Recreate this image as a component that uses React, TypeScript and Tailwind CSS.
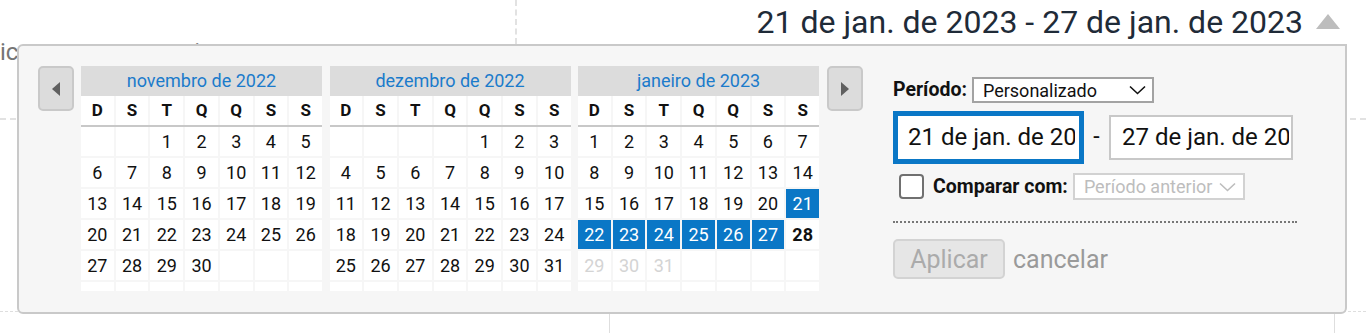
type Month = { title: string; offset: number; days: number };

const WEEK = ['D', 'S', 'T', 'Q', 'Q', 'S', 'S'];

const MONTHS: Month[] = [
  { title: 'novembro de 2022', offset: 2, days: 30 },
  { title: 'dezembro de 2022', offset: 4, days: 31 },
  { title: 'janeiro de 2023', offset: 0, days: 31 },
];

// dia com destaque só no último mês (janeiro)
function dayClass(isLast: boolean, d: number | null) {
  if (!isLast || d === null) return 'bg-white text-[#111]';
  if (d >= 21 && d <= 27) return 'bg-[#0a77c6] text-white';
  if (d === 28) return 'bg-white text-[#111] font-bold';
  if (d > 28) return 'bg-white text-[#d4d4d4]';
  return 'bg-white text-[#111]';
}

function MonthGrid({ month, isLast }: { month: Month; isLast: boolean }) {
  const cells = Array.from({ length: 42 }, (_, i) => {
    const d = i - month.offset + 1;
    return d >= 1 && d <= month.days ? d : null;
  });

  return (
    <div className="w-[241px] h-[225px] overflow-hidden shrink-0">
      <div className="h-[30px] bg-[#dcdcdc] text-center leading-[30px] text-[18px] text-[#1b7bcb]">
        {month.title}
      </div>
      <div className="grid grid-cols-7 gap-x-[2px] border-b-2 border-[#c8c8c8]">
        {WEEK.map((w, i) => (
          <div key={i} className="h-[29px] bg-white flex items-center justify-center font-bold text-[17px] text-[#111]">
            {w}
          </div>
        ))}
      </div>
      <div className="grid grid-cols-7 gap-[2px]">
        {cells.map((d, i) => (
          <div key={i} className={`h-[29px] flex items-center justify-center text-[18px] ${dayClass(isLast, d)}`}>
            {d ?? ''}
          </div>
        ))}
      </div>
    </div>
  );
}

function NavButton({ dir }: { dir: 'prev' | 'next' }) {
  return (
    <div className="w-[36px] h-[45px] shrink-0 rounded-[5px] border-2 border-[#c9c9c9] bg-[#dcdcdc] flex items-center justify-center">
      <svg width="8" height="14" viewBox="0 0 8 14">
        {dir === 'prev' ? (
          <polygon points="8,0 8,14 0,7" fill="#606060" />
        ) : (
          <polygon points="0,0 0,14 8,7" fill="#606060" />
        )}
      </svg>
    </div>
  );
}

function Chevron({ color }: { color: string }) {
  return (
    <svg width="17" height="10" viewBox="0 0 17 10">
      <polyline points="1,1.5 8.5,8.5 16,1.5" fill="none" stroke={color} strokeWidth="1.6" />
    </svg>
  );
}

function RangePanel() {
  return (
    <div className="ml-[30px] pt-[11px] flex flex-col">
      <div className="flex items-center gap-[5px]">
        <span className="font-bold text-[19.5px] text-[#111] leading-none">Período:</span>
        <div className="w-[182px] h-[26px] border-2 border-[#a3a3a3] bg-white flex items-center justify-between pl-[9px] pr-[6px] text-[18px] text-[#111]">
          Personalizado
          <Chevron color="#111" />
        </div>
      </div>

      <div className="mt-[8px] flex items-center">
        <div className="w-[191px] h-[53px] border-[5px] border-[#0a77c6] bg-white pl-[10px] pr-[4px]">
          <div className="overflow-hidden whitespace-nowrap text-[24px] leading-[43px] text-[#111]">21 de jan. de 2023</div>
        </div>
        <span className="w-[25px] text-center text-[23px] text-[#111]">-</span>
        <div className="w-[184px] h-[45px] border-2 border-[#c8c8c8] bg-white pl-[11px] pr-[2px]">
          <div className="overflow-hidden whitespace-nowrap text-[24px] leading-[41px] text-[#111]">27 de jan. de 2023</div>
        </div>
      </div>

      <div className="mt-[8px] pl-[6px] flex items-center">
        <div className="w-[25px] h-[25px] rounded-[4px] border-2 border-[#707070] bg-white" />
        <span className="ml-[9px] font-bold text-[19.5px] text-[#111]">Comparar com:</span>
        <div className="ml-[5px] w-[172px] h-[27px] border-2 border-[#d2d2d2] bg-white flex items-center justify-between pl-[9px] pr-[7px] text-[18px] text-[#bdbdbd]">
          Período anterior
          <Chevron color="#bdbdbd" />
        </div>
      </div>

      <div className="mt-[20px] w-[404px] border-t-2 border-dotted border-[#777]" />

      <div className="mt-[16px] flex items-center">
        <button className="w-[112px] h-[40px] rounded-[5px] border-2 border-[#d3d3d3] bg-[#e6e6e6] text-[25px] text-[#ababab] leading-none">
          Aplicar
        </button>
        <span className="ml-[8px] text-[25px] text-[#9a9a9a]">cancelar</span>
      </div>
    </div>
  );
}

export default function App() {
  return (
    <div className="relative w-[1366px] h-[334px] overflow-hidden bg-white font-['Roboto',sans-serif]">
      {/* página por trás do seletor */}
      <div className="flex h-[44px]">
        <div className="w-[517px] shrink-0 border-r-2 border-dashed border-[#e2e2e2] pt-[38px]">
          <div className="whitespace-nowrap text-[24px] leading-[28px] text-[#757575]">icone novos usuarios</div>
        </div>
        <div className="flex-1 flex justify-end items-start gap-[13px] pr-[26px]">
          <span className="mt-[2px] whitespace-nowrap text-[32px] leading-[40px] text-[#1f2b38]">
            21 de jan. de 2023 - 27 de jan. de 2023
          </span>
          <svg className="mt-[14px]" width="24" height="15" viewBox="0 0 24 15">
            <polygon points="12,0 24,15 0,15" fill="#bdbdbd" />
          </svg>
        </div>
      </div>
      <div className="h-[74px]" />
      <div className="h-[194px] border-t-2 border-dashed border-[#e2e2e2] border-b border-b-[#dedede]" />
      <div className="flex h-[21px]">
        <div className="w-[610px] border-r border-[#dedede]" />
        <div className="w-[725px] border-r border-[#dedede]" />
      </div>

      {/* seletor de período */}
      <div className="absolute left-[17px] top-[44px] w-[1330px] h-[270px] rounded-[6px] rounded-tr-none border-2 border-[#c9c9c9] bg-[#f6f6f6] pt-[20px] pl-[19px] flex items-start">
        <NavButton dir="prev" />
        <div className="ml-[7px] flex gap-[7.5px]">
          {MONTHS.map((m, i) => (
            <MonthGrid key={m.title} month={m} isLast={i === MONTHS.length - 1} />
          ))}
        </div>
        <div className="ml-[8px]">
          <NavButton dir="next" />
        </div>
        <RangePanel />
      </div>
    </div>
  );
}
